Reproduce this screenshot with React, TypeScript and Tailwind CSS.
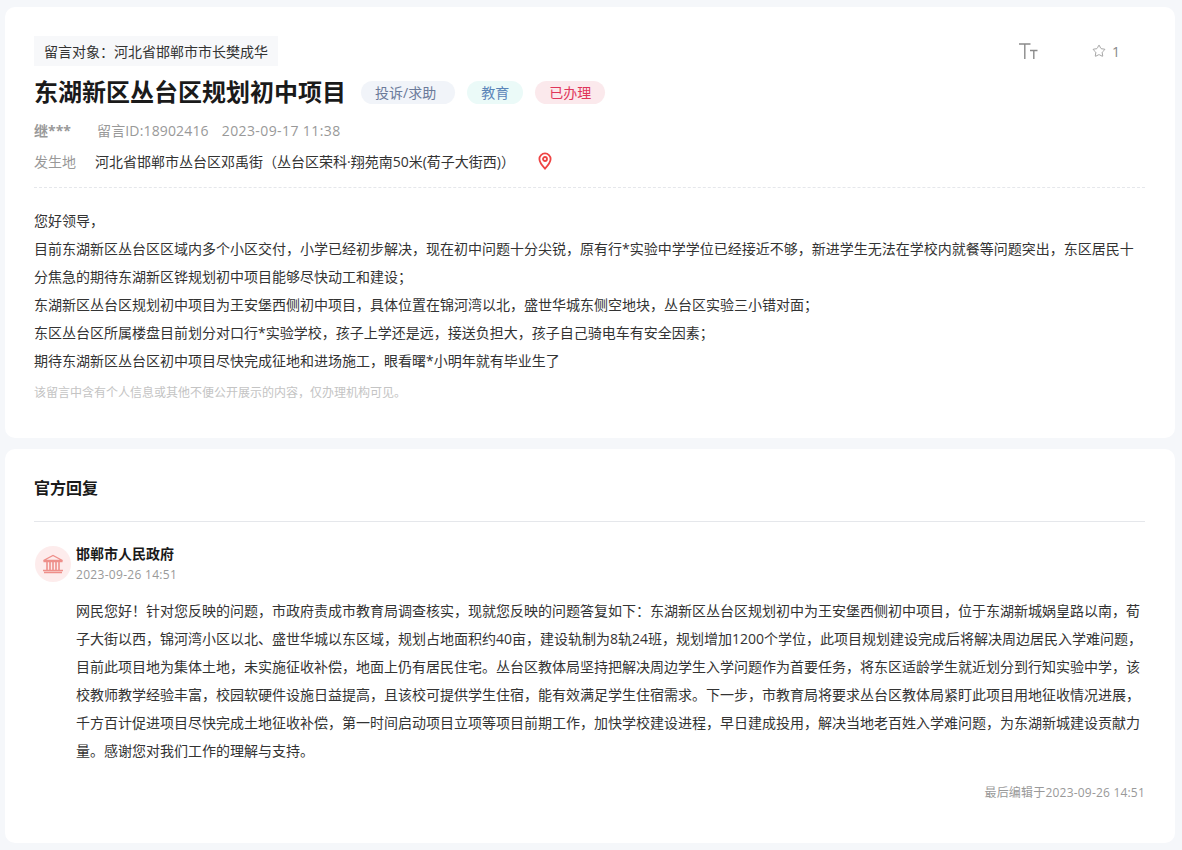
import { Star } from "lucide-react"

const font = { fontFamily: '"Open Sans", "Noto Sans CJK SC", sans-serif' }

function Tag({ label, className }: { label: string; className: string }) {
  return <span className={`h-[23px] rounded-full flex items-center text-[14px] ${className}`}>{label}</span>
}

function MapPin() {
  return (
    <svg width="16" height="18" viewBox="0 0 16 18" fill="none" stroke="#ef4444" strokeWidth="1.8" className="block">
      <path d="M8 16.6C5 13.4 2.4 10.6 2.4 7a5.6 5.6 0 0 1 11.2 0c0 3.6-2.6 6.4-5.6 9.6z" />
      <circle cx="8" cy="7" r="2" />
    </svg>
  )
}

function TextSize() {
  return (
    <svg width="19" height="17" viewBox="0 0 19 17" fill="none" stroke="#8a8a8a" strokeWidth="1.4" className="block">
      <path d="M0 1h11.5M5.8 1v15" />
      <path d="M11 7.5h7.5M14.8 7.5V16" />
    </svg>
  )
}

function Bank() {
  return (
    <svg width="22" height="20" viewBox="0 0 22 20" fill="none" stroke="#ee8f8a" strokeWidth="1.3" className="block">
      <path d="M1.5 6.5L11 1.5l9.5 5z" />
      <path d="M1.5 7.5h19M2 18.5h18M1 16.5h20" />
      <path d="M5 8v8M8 8v8M11 8v8M14 8v8M17 8v8" strokeWidth="1.6" />
    </svg>
  )
}

export default function App() {
  return (
    <div className="h-[850px] overflow-hidden bg-[#f5f7fa] pl-[5px] pr-[7px] pt-[7px] flex flex-col gap-[11px]" style={font}>
      <section className="h-[431px] rounded-[10px] bg-white pl-[29px] pr-[30px] pt-[29px]">
        <div className="flex justify-between">
          <div className="h-[30px] bg-[#f7f8fa] px-[10px] flex items-center text-[14px] text-[#333]">留言对象：河北省邯郸市市长樊成华</div>
          <div className="flex items-center h-[30px] text-[#888]">
            <TextSize />
            <span className="ml-[54px] mr-[25px] flex items-center gap-[6px] text-[14px]">
              <Star size={14} strokeWidth={1.3} />1
            </span>
          </div>
        </div>
        <div className="mt-[9px] flex items-center h-[34px]">
          <h1 className="text-[24px] font-bold text-[#1a1a1a]">东湖新区丛台区规划初中项目</h1>
          <div className="ml-[15px] flex gap-[12px]">
            <Tag label="投诉/求助" className="pl-[14px] pr-[19px] bg-[#f1f4f9] text-[#6b7a99]" />
            <Tag label="教育" className="px-[14px] bg-[#ebfaf8] text-[#5b85b8]" />
            <Tag label="已办理" className="px-[14px] bg-[#fbe9ec] text-[#e0355a]" />
          </div>
        </div>
        <div className="mt-[9px] flex items-center text-[14px] text-[#999] h-[24px]">
          <span className="font-bold w-[63px]">继***</span>
          <span className="tracking-[0.15px]">留言ID:18902416</span>
          <span className="ml-[13px] tracking-[0.4px]">2023-09-17 11:38</span>
        </div>
        <div className="mt-[7px] flex items-center text-[14px] h-[24px]">
          <span className="w-[61px] text-[#999]">发生地</span>
          <span className="text-[#333]">河北省邯郸市丛台区邓禹街（丛台区荣科·翔苑南50米(荀子大街西)）</span>
          <span className="ml-[22px]"><MapPin /></span>
        </div>
        <div className="mt-[14px] border-t border-dashed border-[#e5e7eb]" />
        <div className="mt-[19px] text-[14px] leading-[28px] text-[#333]">
          <p>您好领导，</p>
          <p>目前东湖新区丛台区区域内多个小区交付，小学已经初步解决，现在初中问题十分尖锐，原有行*实验中学学位已经接近不够，新进学生无法在学校内就餐等问题突出，东区居民十分焦急的期待东湖新区铧规划初中项目能够尽快动工和建设；</p>
          <p>东湖新区丛台区规划初中项目为王安堡西侧初中项目，具体位置在锦河湾以北，盛世华城东侧空地块，丛台区实验三小错对面；</p>
          <p>东区丛台区所属楼盘目前划分对口行*实验学校，孩子上学还是远，接送负担大，孩子自己骑电车有安全因素；</p>
          <p>期待东湖新区丛台区初中项目尽快完成征地和进场施工，眼看曙*小明年就有毕业生了</p>
        </div>
        <p className="mt-[9px] text-[12px] text-[#c4c4c4]">该留言中含有个人信息或其他不便公开展示的内容，仅办理机构可见。</p>
      </section>

      <section className="h-[394px] rounded-[10px] bg-white pl-[29px] pr-[30px]">
        <h2 className="pt-[26px] text-[16px] leading-[26px] font-bold text-[#1a1a1a]">官方回复</h2>
        <div className="mt-[20px] border-t border-[#e5e7eb]" />
        <div className="mt-[24px] ml-[1px] flex gap-[5px]">
          <div className="w-[36px] h-[36px] rounded-full bg-[#fdecec] flex items-center justify-center shrink-0"><Bank /></div>
          <div>
            <div className="text-[14px] font-bold leading-[20px] text-[#1a1a1a] -mt-[2px]">邯郸市人民政府</div>
            <div className="mt-[1px] text-[12px] leading-[20px] tracking-[0.3px] text-[#999]">2023-09-26 14:51</div>
          </div>
        </div>
        <p className="mt-[12px] ml-[42px] text-[14px] leading-[28px] text-[#333]">
          网民您好！针对您反映的问题，市政府责成市教育局调查核实，现就您反映的问题答复如下：东湖新区丛台区规划初中为王安堡西侧初中项目，位于东湖新城娲皇路以南，荀子大街以西，锦河湾小区以北、盛世华城以东区域，规划占地面积约40亩，建设轨制为8轨24班，规划增加1200个学位，此项目规划建设完成后将解决周边居民入学难问题，目前此项目地为集体土地，未实施征收补偿，地面上仍有居民住宅。丛台区教体局坚持把解决周边学生入学问题作为首要任务，将东区适龄学生就近划分到行知实验中学，该校教师教学经验丰富，校园软硬件设施日益提高，且该校可提供学生住宿，能有效满足学生住宿需求。下一步，市教育局将要求丛台区教体局紧盯此项目用地征收情况进展，千方百计促进项目尽快完成土地征收补偿，第一时间启动项目立项等项目前期工作，加快学校建设进程，早日建成投用，解决当地老百姓入学难问题，为东湖新城建设贡献力量。感谢您对我们工作的理解与支持。
        </p>
        <div className="mt-[19px] text-right text-[12px] tracking-[0.2px] text-[#999]">最后编辑于2023-09-26 14:51</div>
      </section>
    </div>
  )
}
